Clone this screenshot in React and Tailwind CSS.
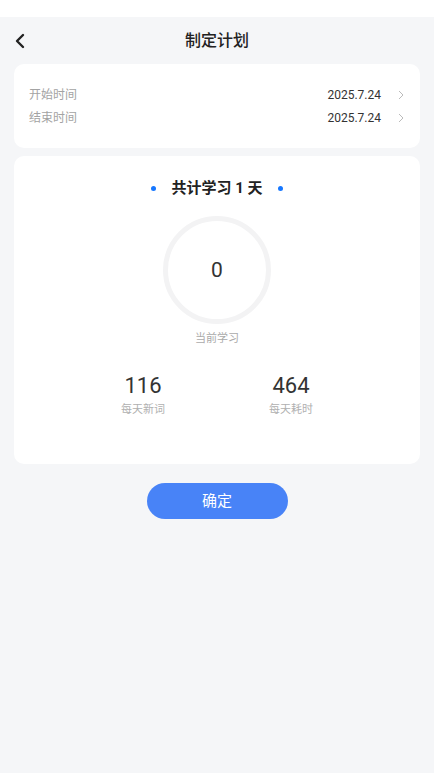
export default function App() {
  const font = { fontFamily: 'Roboto, "Noto Sans CJK SC", sans-serif' };
  return (
    <div className="w-[434px] h-[773px] bg-white flex flex-col" style={font}>
      <div className="h-[17px] bg-white" />
      <div className="flex-1 bg-[#f5f6f8] flex flex-col">
        <div className="relative h-[47px] flex items-center justify-center">
          <svg className="absolute left-[14px] top-[16px]" width="12" height="16" viewBox="0 0 12 16">
            <path d="M9 2 L3 8 L9 14" fill="none" stroke="#222" strokeWidth="2.4" strokeLinecap="round" strokeLinejoin="round" />
          </svg>
          <span className="text-[16px] font-medium text-[#222] leading-none">制定计划</span>
        </div>
        <div className="mx-[14px] bg-white rounded-[10px] h-[84px] px-[15px] flex flex-col justify-center gap-[5px]">
          {['开始时间', '结束时间'].map((l) => (
            <div key={l} className="flex items-center h-[18px]">
              <span className="text-[12px] text-[#a3a3a3] flex-1">{l}</span>
              <span className="text-[12px] text-[#333]">2025.7.24</span>
              <svg className="ml-[17px] mr-[1px]" width="6" height="10" viewBox="0 0 6 10">
                <path d="M1 1 L5 5 L1 9" fill="none" stroke="#bbb" strokeWidth="1" />
              </svg>
            </div>
          ))}
        </div>
        <div className="mx-[14px] mt-[8px] bg-white rounded-[10px] h-[308px] flex flex-col items-center">
          <div className="mt-[21px] flex items-center h-[22px]">
            <span className="w-[5px] h-[5px] rounded-full bg-[#1677ff]" />
            <span className="mx-[15px] text-[15px] font-bold text-[#222]">共计学习 1 天</span>
            <span className="w-[5px] h-[5px] rounded-full bg-[#1677ff]" />
          </div>
          <div className="mt-[17px] w-[108px] h-[108px] rounded-full border-[5px] border-[#f3f3f4] flex items-center justify-center">
            <span className="text-[21px] text-[#333] leading-none">0</span>
          </div>
          <span className="mt-[7px] text-[11px] leading-[16px] text-[#aaa]">当前学习</span>
          <div className="mt-[28px] w-full flex justify-center gap-[104px]">
            <div className="flex flex-col items-center">
              <span className="text-[22px] text-[#333] leading-[22px]">116</span>
              <span className="mt-[6px] text-[11px] leading-[14px] text-[#b0b0b0]">每天新词</span>
            </div>
            <div className="flex flex-col items-center">
              <span className="text-[22px] text-[#333] leading-[22px]">464</span>
              <span className="mt-[6px] text-[11px] leading-[14px] text-[#b0b0b0]">每天耗时</span>
            </div>
          </div>
        </div>
        <div className="mt-[19px] flex justify-center">
          <div className="w-[141px] h-[36px] rounded-full bg-[#4883f7] flex items-center justify-center text-white text-[15px]">确定</div>
        </div>
      </div>
    </div>
  );
}
